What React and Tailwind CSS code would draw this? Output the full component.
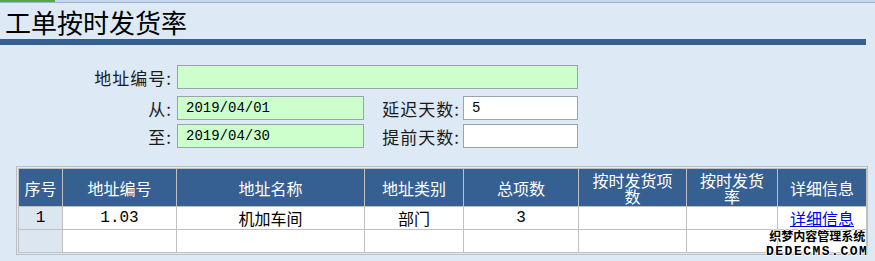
const cjk = { fontFamily: '"Noto Sans CJK SC", "Liberation Sans", sans-serif' };
const mono = { fontFamily: '"Liberation Mono", "Noto Sans CJK SC", monospace' };

const cols = [
    { title: '序号', w: 44 },
    { title: '地址编号', w: 114 },
    { title: '地址名称', w: 188 },
    { title: '地址类别', w: 99 },
    { title: '总项数', w: 115 },
    { title: '按时发货项数', w: 108 },
    { title: '按时发货率', w: 91 },
    { title: '详细信息', w: 89 },
];

function Field({ label, labelW, inputW, value, green, gap = 5 }) {
    return (
        <div className="flex items-center">
            <div className="text-right text-[17px] leading-none tracking-[1px] text-[#1a1a1a]" style={{ width: labelW }}>
                {label}:
            </div>
            <div
                className={`flex h-[24px] items-center border border-[#9aa3ab] px-[8px] text-[14px] text-black ${green ? 'bg-[#ccffcc]' : 'bg-white'}`}
                style={{ width: inputW, marginLeft: gap, ...mono }}
            >
                {value}
            </div>
        </div>
    );
}

export default function App() {
    return (
        <div className="relative h-[261px] w-[875px] overflow-hidden bg-[#dde9f5]" style={cjk}>
            <div className="flex h-[2px]">
                <div className="w-[55px] bg-[#58a83c]" />
                <div className="flex-1 bg-[#c4d6ec]" />
            </div>
            <div className="h-px bg-[#9fb3cc]" />

            <h1 className="mt-[4px] pl-[5px] text-[26px] leading-[30px] text-black">工单按时发货率</h1>
            <div className="mt-[2px] h-[6px] w-[866px] bg-[#366092]" />

            <div className="mt-[20px] flex flex-col">
                <Field label="地址编号" labelW={172} inputW={401} green />
                <div className="mt-[7px] flex items-center">
                    <Field label="从" labelW={172} inputW={187} value="2019/04/01" green />
                    <Field label="延迟天数" labelW={96} inputW={115} value="5" gap={3} />
                </div>
                <div className="mt-[4px] flex items-center">
                    <Field label="至" labelW={172} inputW={187} value="2019/04/30" green />
                    <Field label="提前天数" labelW={96} inputW={115} gap={3} />
                </div>
            </div>

            <div className="ml-[16px] mt-[18px] w-[852px] border border-[#b8bfc6] p-px">
                <table className="w-[848px] table-fixed border-collapse text-[16px]">
                    <colgroup>
                        {cols.map((c) => (
                            <col key={c.title} style={{ width: c.w }} />
                        ))}
                    </colgroup>
                    <thead>
                        <tr className="h-[38px] bg-[#366092] text-white">
                            {cols.map((c, i) => (
                                <th
                                    key={c.title}
                                    className={`border border-[#c0c0c0] text-center text-[16px] font-normal leading-[16px] ${i === 0 ? 'px-[2px]' : 'px-[8px]'}`}
                                >
                                    {c.title}
                                </th>
                            ))}
                        </tr>
                    </thead>
                    <tbody className="text-black">
                        <tr className="h-[23px]">
                            <td className="border border-[#c0c0c0] bg-[#dce6f0] text-center leading-none" style={mono}>1</td>
                            <td className="border border-[#c0c0c0] bg-white text-center leading-none" style={mono}>1.03</td>
                            <td className="border border-[#c0c0c0] bg-white text-center leading-none">机加车间</td>
                            <td className="border border-[#c0c0c0] bg-white text-center leading-none">部门</td>
                            <td className="border border-[#c0c0c0] bg-white text-center leading-none" style={mono}>3</td>
                            <td className="border border-[#c0c0c0] bg-white" />
                            <td className="border border-[#c0c0c0] bg-white" />
                            <td className="border border-[#c0c0c0] bg-white text-center leading-none">
                                <a href="#" className="text-[#0000ee] underline">详细信息</a>
                            </td>
                        </tr>
                        <tr className="h-[23px]">
                            <td className="border border-[#c0c0c0] bg-[#dce6f0]" />
                            {cols.slice(1).map((c) => (
                                <td key={c.title} className="border border-[#c0c0c0] bg-white" />
                            ))}
                        </tr>
                    </tbody>
                </table>
            </div>

            {/* watermark overlay */}
            <div
                className="absolute left-[766px] top-[228px] flex flex-col items-center font-bold text-black"
                style={{ textShadow: '1px 0 #fff, -1px 0 #fff, 0 1px #fff, 0 -1px #fff' }}
            >
                <span className="block text-[12px] leading-[16px]">织梦内容管理系统</span>
                <span className="block text-[13px] leading-[15px] tracking-[1.5px]" style={mono}>DEDECMS.COM</span>
            </div>
        </div>
    );
}
